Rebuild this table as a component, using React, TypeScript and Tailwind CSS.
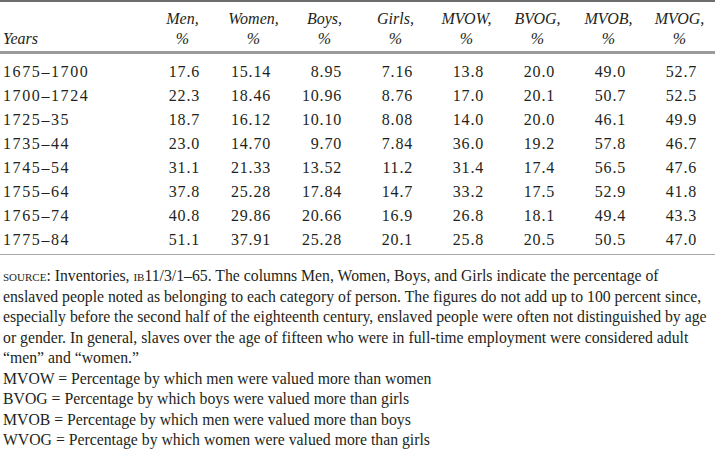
import React from 'react'

const COLUNAS = ['Men', 'Women', 'Boys', 'Girls', 'MVOW', 'BVOG', 'MVOB', 'MVOG']

const LINHAS: [string, string[]][] = [
  ['1675–1700', ['17.6', '15.14', '8.95', '7.16', '13.8', '20.0', '49.0', '52.7']],
  ['1700–1724', ['22.3', '18.46', '10.96', '8.76', '17.0', '20.1', '50.7', '52.5']],
  ['1725–35', ['18.7', '16.12', '10.10', '8.08', '14.0', '20.0', '46.1', '49.9']],
  ['1735–44', ['23.0', '14.70', '9.70', '7.84', '36.0', '19.2', '57.8', '46.7']],
  ['1745–54', ['31.1', '21.33', '13.52', '11.2', '31.4', '17.4', '56.5', '47.6']],
  ['1755–64', ['37.8', '25.28', '17.84', '14.7', '33.2', '17.5', '52.9', '41.8']],
  ['1765–74', ['40.8', '29.86', '20.66', '16.9', '26.8', '18.1', '49.4', '43.3']],
  ['1775–84', ['51.1', '37.91', '25.28', '20.1', '25.8', '20.5', '50.5', '47.0']],
]

const NOTAS = [
  'MVOW = Percentage by which men were valued more than women',
  'BVOG = Percentage by which boys were valued more than girls',
  'MVOB = Percentage by which men were valued more than boys',
  'WVOG = Percentage by which women were valued more than girls',
]

export default function App() {
  return (
    <div className="h-[450px] w-[715px] overflow-hidden bg-white font-['Liberation_Serif',serif] text-[#231f20]">
      <div className="h-[2px] bg-[#6d6d6d]" />
      <table className="w-[715px] table-fixed border-collapse">
        <colgroup>
          <col className="w-[147px]" />
          {COLUNAS.map((c) => (
            <col key={c} className="w-[71px]" />
          ))}
        </colgroup>
        <thead>
          <tr className="text-[16px] italic leading-[20px]">
            <th className="pb-[2px] pl-[3px] pt-[7px] text-left align-bottom font-normal">Years</th>
            {COLUNAS.map((c) => (
              <th key={c} className="pb-[2px] pt-[7px] text-center align-bottom font-normal">
                {c},<br />%
              </th>
            ))}
          </tr>
        </thead>
      </table>
      <div className="h-[3px] bg-[#9a9a9a]" />
      <table className="mt-[6px] w-[715px] table-fixed border-collapse">
        <colgroup>
          <col className="w-[147px]" />
          {COLUNAS.map((c) => (
            <col key={c} className="w-[71px]" />
          ))}
        </colgroup>
        <tbody>
          {LINHAS.map(([anos, valores]) => (
            <tr key={anos} className="h-[24px] text-[16px] leading-[24px]">
              <td className="pl-[3px] tracking-[1.6px]">{anos}</td>
              {valores.map((v, i) => (
                <td key={i} className="pr-[18px] text-right tracking-[0.8px]">
                  {v}
                </td>
              ))}
            </tr>
          ))}
        </tbody>
      </table>
      <div className="mt-[2px] h-px bg-[#a8a8a8]" />
      <div className="mt-[11px] whitespace-nowrap pl-[3px] text-[15.75px] leading-[20.5px]">
        <div>
          <span className="[font-variant-caps:small-caps]">source</span>: Inventories,{' '}
          <span className="[font-variant-caps:small-caps]">ib11/3/1–65</span>. The columns Men, Women, Boys,
          and Girls indicate the percentage of
        </div>
        <div>
          enslaved people noted as belonging to each category of person. The figures do not add up to 100
          percent since,
        </div>
        <div>
          especially before the second half of the eighteenth century, enslaved people were often not
          distinguished by age
        </div>
        <div>
          or gender. In general, slaves over the age of fifteen who were in full-time employment were
          considered adult
        </div>
        <div>“men” and “women.”</div>
        {NOTAS.map((n) => (
          <div key={n}>{n}</div>
        ))}
      </div>
    </div>
  )
}
